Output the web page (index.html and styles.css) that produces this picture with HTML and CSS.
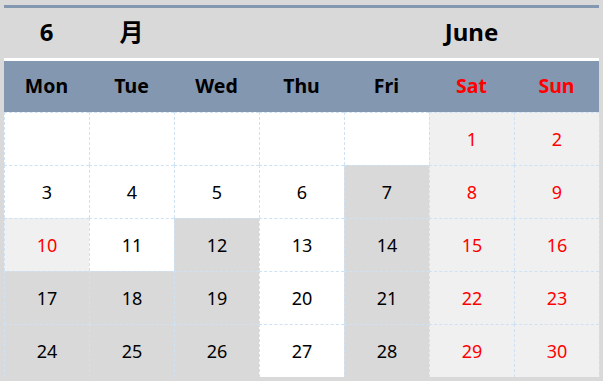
FILE: index.html
```html
<!DOCTYPE html>
<html>
<head>
<meta charset="utf-8">
<link rel="stylesheet" href="styles.css">
</head>
<body>
<div class="cal">
  <div class="topline"></div>
  <div class="title">
    <div class="t">6</div>
    <div class="t">月</div>
    <div class="t"></div>
    <div class="t"></div>
    <div class="t"></div>
    <div class="t">June</div>
    <div class="t"></div>
  </div>
  <div class="days">
    <div class="d">Mon</div>
    <div class="d">Tue</div>
    <div class="d">Wed</div>
    <div class="d">Thu</div>
    <div class="d">Fri</div>
    <div class="d red">Sat</div>
    <div class="d red">Sun</div>
  </div>
  <div class="grid">
    <div class="c w"></div><div class="c w"></div><div class="c w"></div><div class="c w"></div><div class="c w"></div><div class="c l red">1</div><div class="c l red">2</div>
    <div class="c w">3</div><div class="c w">4</div><div class="c w">5</div><div class="c w">6</div><div class="c g">7</div><div class="c l red">8</div><div class="c l red">9</div>
    <div class="c l red">10</div><div class="c w">11</div><div class="c g">12</div><div class="c w">13</div><div class="c g">14</div><div class="c l red">15</div><div class="c l red">16</div>
    <div class="c g">17</div><div class="c g">18</div><div class="c g">19</div><div class="c w">20</div><div class="c g">21</div><div class="c l red">22</div><div class="c l red">23</div>
    <div class="c g">24</div><div class="c g">25</div><div class="c g">26</div><div class="c w">27</div><div class="c g">28</div><div class="c l red">29</div><div class="c l red">30</div>
  </div>
</div>
</body>
</html>
```
FILE: styles.css
```css
html, body {
  margin: 0;
  padding: 0;
  background: #d9d9d9;
  width: 603px;
  height: 381px;
  overflow: hidden;
}
.cal {
  padding: 5px 4px 0 4px;
  font-family: "Noto Sans", "Noto Sans CJK SC", sans-serif;
  color: #000;
}
.topline {
  height: 3px;
  background: #8497b0;
}
.title {
  display: grid;
  grid-template-columns: repeat(7, 85px);
  height: 50px;
  border-bottom: 3px solid #fff;
}
.t {
  display: flex;
  align-items: center;
  justify-content: center;
  font-weight: bold;
  font-size: 24px;
  line-height: 1;
  padding-bottom: 2px;
}
.days {
  display: grid;
  grid-template-columns: repeat(7, 85px);
  height: 51px;
  background: #8497b0;
}
.d {
  display: flex;
  align-items: center;
  justify-content: center;
  font-weight: bold;
  font-size: 19.5px;
  line-height: 1;
  padding-bottom: 2px;
}
.red { color: #ff0000; }
.grid {
  display: grid;
  grid-template-columns: repeat(7, 85px);
  grid-auto-rows: 53px;
  border-right: 1px dashed #cfe2f3;
  width: 595px;
}
.c {
  display: flex;
  align-items: center;
  justify-content: center;
  font-size: 18px;
  border-top: 1px dashed #cfe2f3;
  border-left: 1px dashed #cfe2f3;
  box-sizing: border-box;
}
.w { background: #ffffff; }
.g { background: #d9d9d9; }
.l { background: #f0f0f0; }
```
